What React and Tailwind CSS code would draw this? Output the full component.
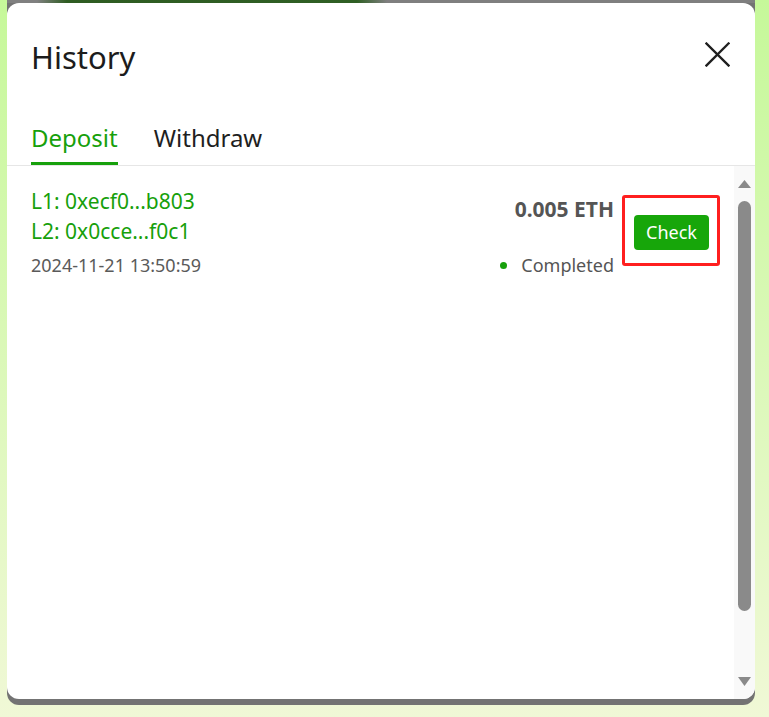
import React from "react";

export default function App() {
  return (
    <div
      className="w-[769px] h-[717px] bg-[linear-gradient(to_bottom,#c6f89a,#f0f8d6)] pl-[7px]"
      style={{ fontFamily: '"Noto Sans", "Open Sans", sans-serif' }}
    >
      <div className="w-[748px] h-[705px] bg-[#737373] rounded-b-[12px] overflow-hidden flex flex-col">
        <div className="h-[3px] shrink-0 bg-[linear-gradient(to_right,#808080_30px,#2e5c22_60px,#2f5f24_350px,#7f7f7f_380px)]" />
        <div className="h-[696px] shrink-0 bg-white rounded-[12px] overflow-hidden flex flex-col">
          {/* header */}
          <div className="flex items-center justify-between pl-[24px] pr-[25px] pt-[35px]">
            <h1 className="text-[31px] leading-[38px] text-[#1c1c1c] font-normal">History</h1>
            <button className="w-[25px] h-[25px] -mt-[6px]" aria-label="close">
              <svg width="25" height="25" viewBox="0 0 25 25" fill="none" stroke="#1f1f1f" strokeWidth="2.3" strokeLinecap="square">
                <line x1="1.5" y1="1.5" x2="23.5" y2="23.5" />
                <line x1="23.5" y1="1.5" x2="1.5" y2="23.5" />
              </svg>
            </button>
          </div>
          {/* tabs */}
          <div className="mt-[46px] flex gap-[36px] pl-[24px] border-b border-[#e6e6e6]">
            <div className="text-[24px] leading-[32px] pb-[8px] border-b-[3px] border-[#17a00b] text-[#17a00b]">Deposit</div>
            <div className="text-[24px] leading-[32px] pb-[8px] border-b-[3px] border-transparent text-[#1f1f1f]">Withdraw</div>
          </div>
          {/* content */}
          <div className="flex-1 flex">
            <div className="flex-1 pl-[24px] pr-[14px]">
              <div className="flex items-start">
                <div className="flex-1 pt-[20px]">
                  <div className="text-[21px] leading-[30px] text-[#17a00b]">L1: 0xecf0...b803</div>
                  <div className="text-[21px] leading-[31px] text-[#17a00b]">L2: 0x0cce...f0c1</div>
                  <div className="mt-[6px] text-[18px] leading-[24px] text-[#5a5a5a]">2024-11-21 13:50:59</div>
                </div>
                <div className="flex flex-col items-end pt-[30px]">
                  <div className="text-[21px] leading-[26px] font-bold text-[#555555]">0.005 ETH</div>
                  <div className="mt-[31px] flex items-center gap-[14px] text-[18px] leading-[24px] text-[#555555]">
                    <span className="w-[7px] h-[7px] rounded-full bg-[#17a00b]" />
                    <span>Completed</span>
                  </div>
                </div>
                <div className="ml-[8px] mt-[29px] border-[3px] border-[#ff1f1f] rounded-[3px] pl-[9px] pr-[8px] pt-[17px] pb-[13px]">
                  <button className="w-[75px] h-[35px] rounded-[4px] bg-[#17a60a] text-white text-[18px] leading-[35px] text-center">
                    Check
                  </button>
                </div>
              </div>
            </div>
            {/* scrollbar */}
            <div className="w-[21px] bg-[#f9f9f9] flex flex-col items-center">
              <svg className="mt-[14px]" width="13" height="8" viewBox="0 0 13 8">
                <polygon points="6.5,0 13,8 0,8" fill="#8a8a8a" />
              </svg>
              <div className="mt-[13px] w-[13px] h-[410px] rounded-full bg-[#8a8a8a]" />
              <svg className="mt-[66px]" width="13" height="9" viewBox="0 0 13 9">
                <polygon points="0,0 13,0 6.5,9" fill="#8a8a8a" />
              </svg>
            </div>
          </div>
        </div>
      </div>
    </div>
  );
}
